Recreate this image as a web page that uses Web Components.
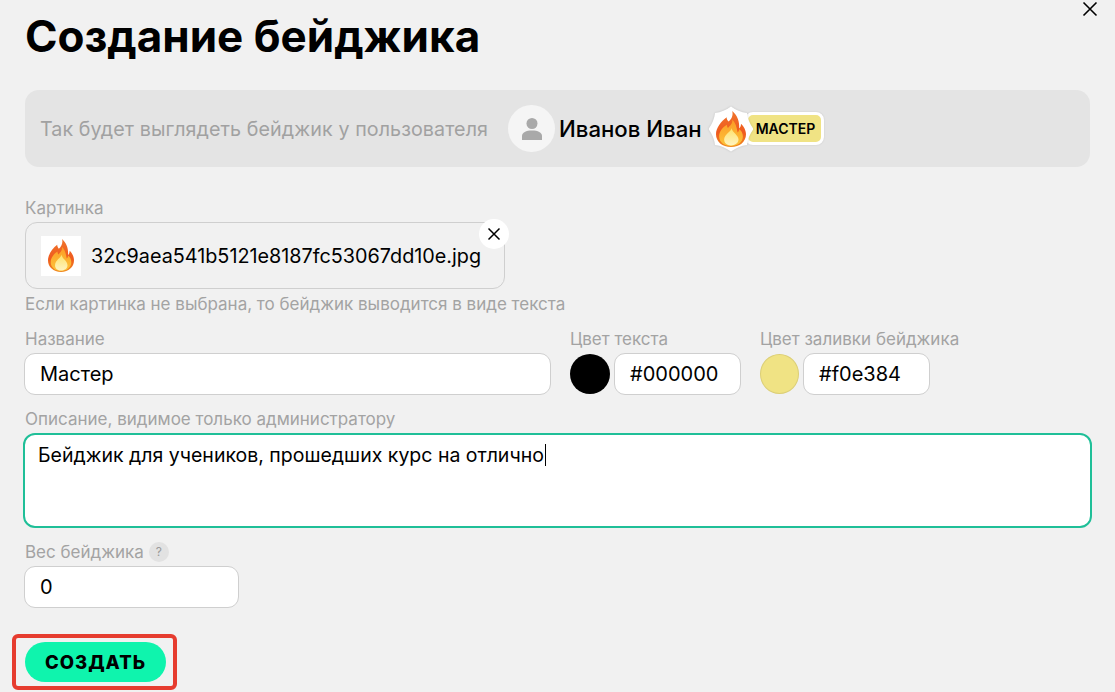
<!DOCTYPE html>
<html lang="ru">
<head>
<meta charset="utf-8">
<title>Создание бейджика</title>
<style>
  html, body { margin: 0; height: 692px; overflow: hidden; background: #f1f1f1; }
  body { font-family: "Inter", "Noto Sans", sans-serif; color: #000; }
</style>
</head>
<body>
<badge-page></badge-page>

<script>
class FlameIcon extends HTMLElement {
  constructor() {
    super();
    this.attachShadow({ mode: 'open' }).innerHTML = `
      <style>:host { display: block; width: 26px; height: 33px; } svg { display: block; width: 100%; height: 100%; }</style>
      <svg viewBox="3 1 24 34" preserveAspectRatio="none">
        <defs>
          <linearGradient id="o" x1="0" y1="0" x2="0" y2="1">
            <stop offset="0" stop-color="#f0752c"/><stop offset=".6" stop-color="#ef5a1e"/><stop offset="1" stop-color="#f08a20"/>
          </linearGradient>
          <linearGradient id="m" x1="0" y1="0" x2="0" y2="1">
            <stop offset="0" stop-color="#fb9a26"/><stop offset="1" stop-color="#fdc53a"/>
          </linearGradient>
          <linearGradient id="y" x1="0" y1="0" x2="0" y2="1">
            <stop offset="0" stop-color="#fde26a"/><stop offset="1" stop-color="#fff3c0"/>
          </linearGradient>
        </defs>
        <path fill="url(#o)" d="M16 1c1 5-1 8-3 10-1-1-1.500-2.500-1.500-4C7 11 3 17 3 23c0 7 5 12 12 12s12-5 12-12c0-4-2-8-4-10 0 2-.5 3.500-1.500 4.500C22 11 20 5 16 1z"/>
        <path fill="url(#m)" d="M16 9c.5 4-2 6-3.500 8-.5-1-.8-1.800-.8-3C7.500 17 5.500 21 5.500 25c0 5.500 4.300 9 9.500 9s9.500-3.500 9.500-9c0-3-1.200-5.500-3-7 0 1.500-.5 2.500-1.200 3.200C19.500 16 18.500 12 16 9z"/>
        <path fill="url(#y)" d="M15.500 17c0 3-6 6-6 11 0 3.500 2.500 5.500 5.500 5.500s6-2 6-5.500c0-4.500-5-6.500-5.500-11z"/>
      </svg>`;
  }
}
customElements.define('flame-icon', FlameIcon);

// scalloped seal behind the flame: 8 points with concave edges
function sealPath(cx, cy, outer, inner) {
  let d = '';
  for (let i = 0; i < 8; i++) {
    const a = i * Math.PI / 4 - Math.PI / 2;
    const b = a + Math.PI / 8;
    const c = a + Math.PI / 4;
    const pt = (r, t) => (cx + r * Math.cos(t)).toFixed(1) + ' ' + (cy + r * Math.sin(t)).toFixed(1);
    if (i === 0) d += 'M' + pt(outer, a);
    d += 'Q' + pt(inner, b) + ' ' + pt(outer, c);
  }
  return d + 'z';
}

class UserBadge extends HTMLElement {
  constructor() {
    super();
    this.attachShadow({ mode: 'open' }).innerHTML = `
      <style>
        :host { display: flex; align-items: center; color: #000; }
        .seal { width: 44px; height: 46px; display: flex; align-items: center; justify-content: center; position: relative; z-index: 1; flex: none; }
        .seal svg.bg { position: absolute; inset: 0; width: 44px; height: 46px; filter: drop-shadow(0 0 1px rgba(0,0,0,.15)); }
        flame-icon { width: 30px; height: 36px; position: relative; }
        .pill { margin-left: -8px; height: 33px; box-sizing: border-box; border: 3px solid #fff; border-radius: 8px;
          background: #f0e384; display: flex; align-items: center; padding: 0 6px 0 8px;
          font-size: 14px; font-weight: 600; white-space: nowrap; box-shadow: 0 0 2px rgba(0,0,0,.12); }
      </style>
      <div class="seal">
        <svg class="bg" viewBox="0 0 44 46"><path fill="#fff" d="${sealPath(22, 23, 22.5, 18.500)}"/></svg>
        <flame-icon></flame-icon>
      </div>
      <div class="pill"><slot></slot></div>`;
  }
}
customElements.define('user-badge', UserBadge);

class BadgePreview extends HTMLElement {
  constructor() {
    super();
    this.attachShadow({ mode: 'open' }).innerHTML = `
      <style>
        :host { display: flex; align-items: center; height: 77px; margin: 0 1px; padding: 0 15px; box-sizing: border-box;
          background: #e4e4e4; border-radius: 14px; }
        .hint { font-size: 19.700px; letter-spacing: .08px; color: #a1a1a1; width: 468px; white-space: nowrap; flex: none; }
        .avatar { width: 47px; height: 47px; border-radius: 50%; background: #f5f5f5; display: flex; align-items: center; justify-content: center; flex: none; }
        .name { font-size: 22.200px; font-weight: 500; margin: 0 7px 0 4px; white-space: nowrap; }
      </style>
      <span class="hint">Так будет выглядеть бейджик у пользователя</span>
      <div class="avatar">
        <svg width="22" height="24" viewBox="0 0 22 24"><circle cx="11" cy="6.500" r="5.500" fill="#a9a9a9"/><path fill="#a9a9a9" d="M1 23v-4c0-3.500 4-5.500 10-5.500s10 2 10 5.500v4z"/></svg>
      </div>
      <span class="name">Иванов Иван</span>
      <user-badge>МАСТЕР</user-badge>`;
  }
}
customElements.define('badge-preview', BadgePreview);

class FormField extends HTMLElement {
  static get observedAttributes() {
    return ["label"];
  }

  constructor() {
    super();
    this.attachShadow({ mode: 'open' }).innerHTML = `
      <style>
        :host { display: block; }
        .label { height: 20px; line-height: 20px; font-size: 17px; color: #a3a3a3; margin: 0 0 4px var(--label-offset, 1px); white-space: nowrap; display: flex; align-items: center; gap: 5px; }
      </style>
      <div class="label"><span id="t"></span><slot name="extra"></slot></div>
      <slot></slot>`;
  }

  attributeChangedCallback(attrName, oldVal, newVal) {
    this.shadowRoot.getElementById('t').textContent = newVal;
  }
}
customElements.define('form-field', FormField);

class TextBox extends HTMLElement {
  constructor() {
    super();
    this.attachShadow({ mode: 'open' }).innerHTML = `
      <style>
        :host { display: flex; align-items: center; height: 42px; box-sizing: border-box; padding: 0 15px;
          background: #fff; border: 1px solid #cfcfcf; border-radius: 11px; font-size: 20px; white-space: nowrap; }
      </style>
      <slot></slot>`;
  }
}
customElements.define('text-box', TextBox);

class ColorInput extends HTMLElement {
  static get observedAttributes() {
    return ["color", "edge"];
  }

  constructor() {
    super();
    this.attachShadow({ mode: 'open' }).innerHTML = `
      <style>
        :host { display: flex; align-items: center; gap: 4px; }
        .dot { width: var(--dot-size, 40px); height: 40px; border-radius: 50%; box-sizing: border-box; flex: none; }
        text-box { flex: 1; }
      </style>
      <div class="dot" id="d"></div>
      <text-box><slot></slot></text-box>`;
  }

  attributeChangedCallback(attrName, oldVal, newVal) {
    const d = this.shadowRoot.getElementById('d');
    if (attrName === 'color') d.style.background = newVal;
    if (attrName === 'edge') d.style.border = '1px solid ' + newVal;
  }
}
customElements.define('color-input', ColorInput);

class FileBox extends HTMLElement {
  constructor() {
    super();
    this.attachShadow({ mode: 'open' }).innerHTML = `
      <style>
        :host { display: flex; align-items: center; position: relative; width: 480px; height: 67px; margin-left: 1px; box-sizing: border-box;
          padding: 0 15px; border: 1px solid #cfcfcf; border-radius: 12px; font-size: 19.800px; white-space: nowrap; }
        .thumb { width: 40px; height: 40px; background: #fff; display: flex; align-items: center; justify-content: center; margin-right: 10px; flex: none; }
        .remove { position: absolute; right: -5px; top: -4px; width: 30px; height: 30px; border-radius: 50%; background: #fff;
          display: flex; align-items: center; justify-content: center; }
      </style>
      <div class="thumb"><flame-icon></flame-icon></div>
      <slot></slot>
      <div class="remove">
        <svg width="14" height="14" viewBox="0 0 14 14"><path d="M1.500 1.500l11 11M12.500 1.500l-11 11" stroke="#000" stroke-width="1.500" fill="none"/></svg>
      </div>`;
  }
}
customElements.define('file-box', FileBox);

class BadgePage extends HTMLElement {
  constructor() {
    super();
    this.attachShadow({ mode: 'open' }).innerHTML = `
      <style>
        :host { display: block; position: relative; width: 1115px; height: 692px; box-sizing: border-box; padding: 0 24px; }
        h1 { margin: 0 0 0 1px; height: 90px; line-height: 72px; font-size: 44px; font-weight: 700; white-space: nowrap; }
        .close { position: absolute; left: 1082px; top: 1px; }
        .image { margin-top: 31px; }
        .hint { margin: 5px 0 0 1px; height: 20px; line-height: 20px; font-size: 17px; color: #a3a3a3; white-space: nowrap; }
        .row { display: flex; margin-top: 15px; }
        .name { width: 527px; margin-right: 19px; }
        .text-color { width: 171px; margin-right: 19px; --label-offset: 0; }
        .fill-color { width: 170px; --label-offset: 0; --dot-size: 39px; }
        .desc { margin-top: 14px; }
        .area { height: 95px; margin: 0 -1px; box-sizing: border-box; padding: 9px 13px; background: #fff; border: 2px solid #1fbf98; border-radius: 12px; font-size: 19.500px; line-height: 22px; white-space: nowrap; display: flex; }
        .caret { width: 1px; height: 22px; background: #000; margin-left: 1px; }
        .weight { margin-top: 14px; width: 215px; }
        .q { width: 20px; height: 20px; border-radius: 50%; background: #e2e2e2; color: #999; font-size: 12px; text-align: center; line-height: 20px; }
        .submit { margin: 34px 0 0 1px; width: 141px; height: 40px; border-radius: 20px; background: #0ff4ad; display: flex; align-items: center; justify-content: center;
          font-size: 18.500px; font-weight: 800; letter-spacing: 1px; }
        .mark { position: absolute; left: 12px; top: 634px; width: 165px; height: 56px; box-sizing: border-box; border: 4px solid #e63c2f; border-radius: 6px; }
      </style>
      <h1>Создание бейджика</h1>
      <svg class="close" width="16" height="16" viewBox="0 0 16 16"><path d="M1.500 1.500l13 13M14.500 1.500l-13 13" stroke="#000" stroke-width="1.600" fill="none"/></svg>
      <badge-preview></badge-preview>
      <form-field class="image" label="Картинка"><file-box>32c9aea541b5121e8187fc53067dd10e.jpg</file-box></form-field>
      <div class="hint">Если картинка не выбрана, то бейджик выводится в виде текста</div>
      <div class="row">
        <form-field class="name" label="Название"><text-box>Мастер</text-box></form-field>
        <form-field class="text-color" label="Цвет текста"><color-input color="#000000">#000000</color-input></form-field>
        <form-field class="fill-color" label="Цвет заливки бейджика"><color-input color="#f0e384" edge="#dccf76">#f0e384</color-input></form-field>
      </div>
      <form-field class="desc" label="Описание, видимое только администратору">
        <div class="area"><span>Бейджик для учеников, прошедших курс на отлично</span><span class="caret"></span></div>
      </form-field>
      <form-field class="weight" label="Вес бейджика"><span class="q" slot="extra">?</span><text-box>0</text-box></form-field>
      <div class="submit">СОЗДАТЬ</div>
      <div class="mark"></div>`;
  }
}
customElements.define('badge-page', BadgePage);
</script>
</body>
</html>
